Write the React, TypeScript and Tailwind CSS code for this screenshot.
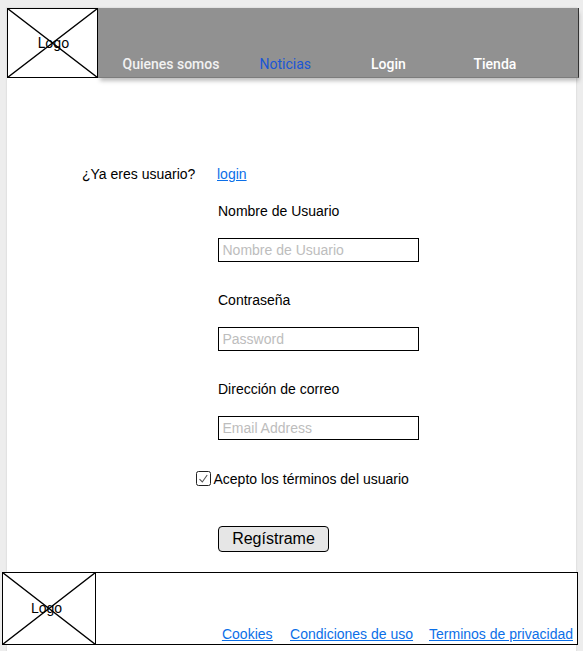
import React from "react";

function LogoBox({ width, height, labelShift }: { width: number; height: number; labelShift: string }) {
  return (
    <div className="relative flex h-full shrink-0 items-center justify-center bg-white" style={{ width }}>
      <span className={`text-[14px] leading-5 ${labelShift}`}>Logo</span>
      <svg className="absolute inset-0" width={width} height={height} fill="none" stroke="#000">
        <rect x="0.5" y="0.5" width={width - 1} height={height - 1} />
        <path d={`M.5 .5 L${width - 0.5} ${height - 0.5} M${width - 0.5} .5 L.5 ${height - 0.5}`} strokeWidth="1.4" />
      </svg>
    </div>
  );
}

function Field({ label, placeholder }: { label: string; placeholder: string }) {
  return (
    <label className="flex flex-col gap-[17px]">
      <span className="h-5">{label}</span>
      <input
        className="h-6 w-[201px] border border-black bg-white px-[3.5px] text-[14px] outline-none placeholder:text-[#bdbdbd]"
        placeholder={placeholder}
      />
    </label>
  );
}

export default function App() {
  return (
    <div className="h-[651px] w-[583px] overflow-hidden bg-[#ededed] pt-2 pl-[7px] font-['Liberation_Sans',Arial,sans-serif] text-[14px] leading-5 text-black">
      <div className="h-[643px] w-[569px] bg-white shadow-[0_0_1px_1px_#e2e2e2]">
        <header className="flex h-[70px] w-[572px] font-[Roboto,sans-serif]">
          <LogoBox width={91} height={70} labelShift="ml-[2px]" />
          <nav className="flex flex-1 items-start border-r border-b border-r-[#333] border-b-[#7c7c7c] bg-[#919191] pt-[46px] font-medium text-white shadow-[1px_4px_4px_-1px_rgba(0,0,0,0.25)]">
            <a className="ml-[24.5px] w-[137px] text-[#f2f2f2]">Quienes somos</a>
            <a className="w-[111.5px] font-normal text-[#1a56d6]">Noticias</a>
            <a className="w-[102.5px]">Login</a>
            <a>Tienda</a>
          </nav>
        </header>

        <main className="pt-[86px]">
          <div className="flex pl-[75px]">
            <span className="w-[135px]">¿Ya eres usuario?</span>
            <a className="text-[#0b6fe8] underline">login</a>
          </div>
          <form className="pt-[17px] pl-[211px]">
            <div className="flex flex-col gap-7">
              <Field label="Nombre de Usuario" placeholder="Nombre de Usuario" />
              <Field label="Contraseña" placeholder="Password" />
              <Field label="Dirección de correo" placeholder="Email Address" />
            </div>
            <div className="mt-[29px] -ml-[22px] flex h-5 items-center gap-[2.5px]">
              <svg width="15" height="16" viewBox="0 0 15 16" fill="none">
                <rect x="0.5" y="0.5" width="14" height="14" rx="2" stroke="#222" />
                <path d="M3.5 8.2 L6.3 11 L11.2 4" stroke="#555" strokeWidth="1.1" />
              </svg>
              <span>Acepto los términos del usuario</span>
            </div>
            <button
              type="button"
              className="mt-[37px] block h-[26px] w-[111px] rounded-[4px] border border-black bg-[#e6e6e6] text-[16px] leading-6"
            >
              Regístrame
            </button>
          </form>
        </main>

        <footer className="relative mt-5 -ml-[5px] flex h-[73px] w-[576px] bg-white">
          <LogoBox width={94} height={73} labelShift="-mt-[2px] mr-[5px]" />
          <div className="-ml-px flex flex-1 items-end justify-end border border-black pr-1 text-[#0b6fe8] underline">
            <a className="mr-[17.5px]">Cookies</a>
            <a className="mr-4">Condiciones de uso</a>
            <a>Terminos de privacidad</a>
          </div>
        </footer>
      </div>
    </div>
  );
}
